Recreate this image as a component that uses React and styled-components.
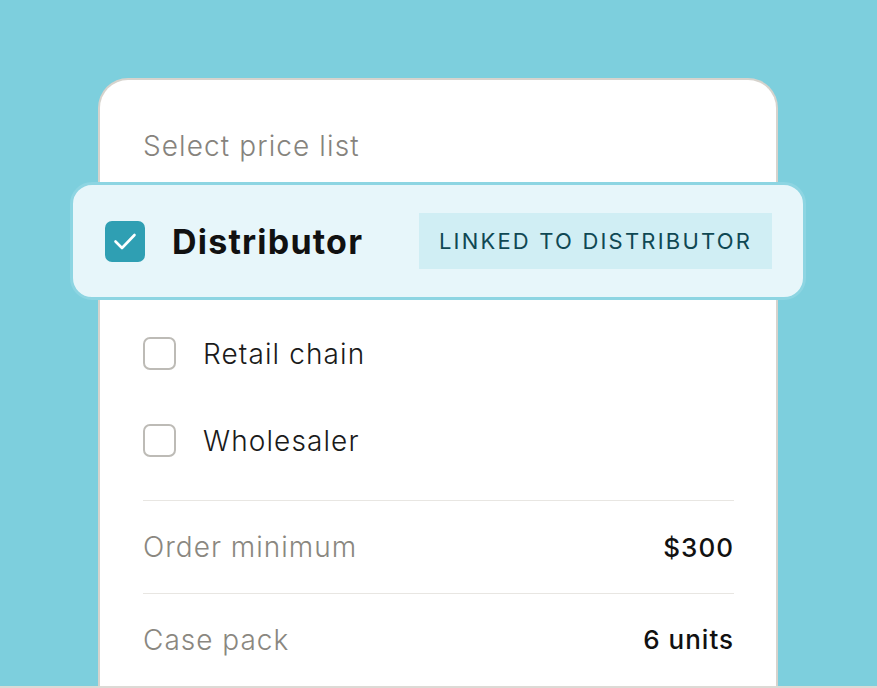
import React from 'react';
import styled, { createGlobalStyle } from 'styled-components';

const GlobalStyle = createGlobalStyle`
    html, body {
        margin: 0;
        padding: 0;
        background: #7dcfdd;
        overflow: hidden;
    }
    * { box-sizing: border-box; }
`

const options = [
    { label: 'Retail chain' },
    { label: 'Wholesaler' },
];

const details = [
    { label: 'Order minimum', value: '$300' },
    { label: 'Case pack', value: '6 units' },
];

const CheckIcon = () => (
    <svg width="40" height="40" viewBox="0 0 40 40" fill="none">
        <polyline points="10.5,20.5 17,27 29.5,14" stroke="#fff" strokeWidth="2.6" strokeLinecap="round" strokeLinejoin="round" />
    </svg>
);

const App = () => {
    return (
        <>
            <GlobalStyle />
            <Page>
                <Card>
                    <Title>Select price list</Title>
                    <Selected>
                        <CheckedBox><CheckIcon /></CheckedBox>
                        <SelectedName>Distributor</SelectedName>
                        <Badge>LINKED TO DISTRIBUTOR</Badge>
                    </Selected>
                    <OptionList>
                        {options.map((opt) => (
                            <Option key={opt.label}>
                                <EmptyBox />
                                <OptionLabel>{opt.label}</OptionLabel>
                            </Option>
                        ))}
                    </OptionList>
                    {details.map((d) => (
                        <DetailRow key={d.label}>
                            <DetailLabel>{d.label}</DetailLabel>
                            <DetailValue>{d.value}</DetailValue>
                        </DetailRow>
                    ))}
                </Card>
            </Page>
        </>
    )
}

const Page = styled.div`
    height: 688px;
    padding: 78px 0 0 98px;
    border-bottom: 2px solid #dcdad5;
    display: flex;
    font-family: Inter, "Liberation Sans", sans-serif;
`
const Card = styled.div`
    width: 680px;
    height: 100%;
    background: #fff;
    border: 2px solid #d6d3cd;
    border-bottom: none;
    border-radius: 30px 30px 0 0;
    padding: 48px 42px 0 43px;
    display: flex;
    flex-direction: column;
`
const Title = styled.div`
    height: 36px;
    line-height: 36px;
    font-size: 28px;
    font-weight: 350;
    color: #86837d;
    letter-spacing: 1.1px;
`
const Selected = styled.div`
    margin: 18px -72px 0 -73px;
    height: 118px;
    background: #e7f6fa;
    border: 3px solid #8dd5e2;
    border-radius: 22px;
    display: flex;
    align-items: center;
    padding: 0 31px 0 32px;
`
const CheckedBox = styled.div`
    width: 40px;
    height: 41px;
    border-radius: 7px;
    background: #2f9fb3;
    display: flex;
    align-items: center;
    justify-content: center;
    flex-shrink: 0;
`
const SelectedName = styled.div`
    margin-left: 27px;
    flex: 1;
    font-size: 34px;
    font-weight: 700;
    color: #111;
    letter-spacing: 1.2px;
`
const Badge = styled.div`
    width: 353px;
    height: 56px;
    background: #d0eef4;
    color: #0f4853;
    font-size: 22px;
    letter-spacing: 2.2px;
    display: flex;
    align-items: center;
    justify-content: center;
`
const OptionList = styled.div`
    padding: 10px 0 16px;
    border-bottom: 1.5px solid #e8e6e2;
`
const Option = styled.div`
    height: 87px;
    display: flex;
    align-items: center;
`
const EmptyBox = styled.div`
    width: 33px;
    height: 33px;
    border: 2px solid #bdbbb6;
    border-radius: 7px;
    flex-shrink: 0;
`
const OptionLabel = styled.div`
    margin-left: 27px;
    font-size: 28px;
    font-weight: 350;
    color: #1a1a1a;
    letter-spacing: 1.1px;
`
const DetailRow = styled.div`
    height: 92px;
    display: flex;
    align-items: center;
    justify-content: space-between;
    & + & {
        border-top: 1.5px solid #e8e6e2;
    }
`
const DetailLabel = styled.div`
    font-size: 28px;
    font-weight: 350;
    color: #8a8780;
    letter-spacing: 1px;
`
const DetailValue = styled.div`
    font-size: 26px;
    font-weight: 500;
    color: #111;
    letter-spacing: 1px;
`

export default App;
